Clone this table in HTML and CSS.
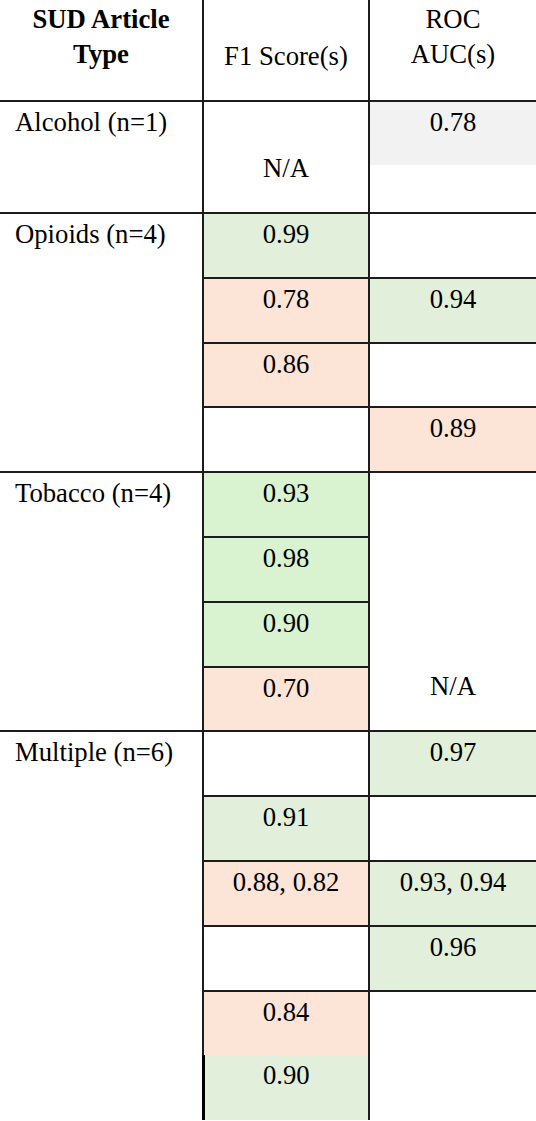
FILE: index.html
```html
<!DOCTYPE html>
<html lang="en">
<head>
    <meta charset="UTF-8">
    <meta name="viewport" content="width=device-width, initial-scale=1.0">
    <title>SUD Article Scores</title>
    <link rel="stylesheet" href="styles.css">
</head>
<body>

    <table class="results">
        <colgroup>
            <col class="col-type">
            <col class="col-f1">
            <col class="col-roc">
        </colgroup>
        <thead>
            <tr>
                <th class="head-type">SUD Article<br>Type</th>
                <th class="head-f1">F1 Score(s)</th>
                <th class="head-roc">ROC<br>AUC(s)</th>
            </tr>
        </thead>
        <tbody>
            <!-- Alcohol -->
            <tr class="group alc-top">
                <td class="type" rowspan="2">Alcohol (n=1)</td>
                <td class="val na-alc" rowspan="2">N/A</td>
                <td class="val grey">0.78</td>
            </tr>
            <tr class="alc-bottom">
                <td class="val no-line"></td>
            </tr>

            <!-- Opioids -->
            <tr class="group">
                <td class="type" rowspan="4">Opioids (n=4)</td>
                <td class="val green">0.99</td>
                <td class="val"></td>
            </tr>
            <tr>
                <td class="val salmon">0.78</td>
                <td class="val green">0.94</td>
            </tr>
            <tr>
                <td class="val salmon">0.86</td>
                <td class="val"></td>
            </tr>
            <tr>
                <td class="val"></td>
                <td class="val salmon">0.89</td>
            </tr>

            <!-- Tobacco -->
            <tr class="group">
                <td class="type" rowspan="4">Tobacco (n=4)</td>
                <td class="val lime">0.93</td>
                <td class="val na-tob" rowspan="4">N/A</td>
            </tr>
            <tr>
                <td class="val lime">0.98</td>
            </tr>
            <tr>
                <td class="val lime">0.90</td>
            </tr>
            <tr>
                <td class="val salmon">0.70</td>
            </tr>

            <!-- Multiple -->
            <tr class="group">
                <td class="type" rowspan="6">Multiple (n=6)</td>
                <td class="val"></td>
                <td class="val green">0.97</td>
            </tr>
            <tr>
                <td class="val green">0.91</td>
                <td class="val"></td>
            </tr>
            <tr>
                <td class="val salmon">0.88, 0.82</td>
                <td class="val green">0.93, 0.94</td>
            </tr>
            <tr>
                <td class="val"></td>
                <td class="val green">0.96</td>
            </tr>
            <tr>
                <td class="val salmon">0.84</td>
                <td class="val" rowspan="2"></td>
            </tr>
            <tr>
                <td class="val green no-line marked">0.90</td>
            </tr>
        </tbody>
    </table>

</body>
</html>
```

FILE: styles.css
```css
* {
    margin: 0;
    padding: 0;
    box-sizing: border-box;
}

body {
    background: #fff;
    font-family: 'Liberation Serif', 'Times New Roman', serif;
    color: #000;
}

.results {
    width: 536px;
    table-layout: fixed;
    border-collapse: collapse;
    font-size: 26.7px;
    line-height: 31px;
}

.col-type {
    width: 203px;
}

.col-f1 {
    width: 166px;
}

.col-roc {
    width: 167px;
}

th, td {
    vertical-align: top;
    font-weight: normal;
}

/* header */
thead tr {
    height: 101px;
}

th {
    text-align: center;
    line-height: 35px;
    padding-top: 2px;
    border-bottom: 2px solid #1c1c1c;
}

.head-type {
    font-weight: bold;
}

.head-f1,
.head-roc {
    border-left: 2px solid #1c1c1c;
}

.head-f1 {
    padding-top: 39px;
}

/* body rows */
tbody tr {
    height: 64.8px;
}

.alc-top {
    height: 64px;
}

.alc-bottom {
    height: 48px;
}

.group td {
    border-top: 2px solid #1c1c1c;
}

.type {
    padding: 5px 0 0 15px;
}

.val {
    text-align: center;
    padding-top: 5px;
    border-top: 2px solid #1c1c1c;
    border-left: 2px solid #1c1c1c;
}

.val.no-line {
    border-top: none;
}

.na-alc {
    padding-top: 51px;
}

.na-tob {
    vertical-align: bottom;
    padding-bottom: 28px;
}

.marked {
    border-left: 3px solid #000;
}

.grey {
    background: #f2f2f2;
}

.green {
    background: #e2efda;
}

.lime {
    background: #d9f2d0;
}

.salmon {
    background: #fce4d6;
}
```
